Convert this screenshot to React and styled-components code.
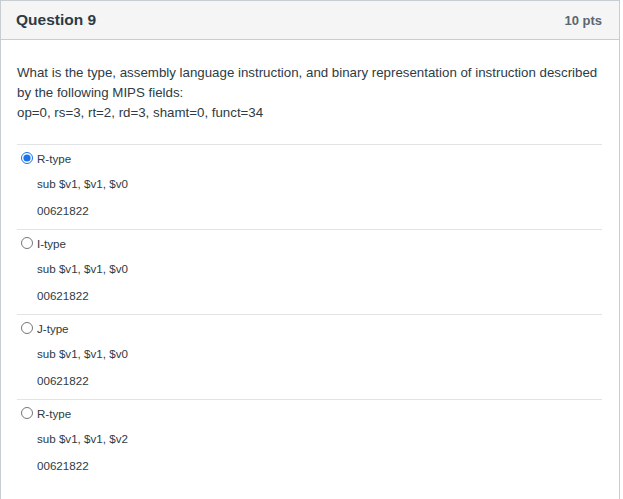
import React from 'react';
import styled, { createGlobalStyle } from 'styled-components';

const GlobalStyle = createGlobalStyle`
    html, body {
        margin: 0;
        padding: 0;
        background: #ffffff;
        font-family: "Liberation Sans", Arial, sans-serif;
        color: #2d3b45;
    }
`;

const Panel = styled.div`
    width: 620px;
    min-height: 520px;
    border: 1px solid #c7cdd1;
    border-bottom: none;
    box-sizing: border-box;
    background: white;
`;

const Header = styled.div`
    height: 39px;
    box-sizing: border-box;
    display: flex;
    align-items: center;
    justify-content: space-between;
    padding: 0 17px 0 15px;
    background: #f5f5f5;
    border-bottom: 1px solid #c7cdd1;
`;

const Title = styled.div`
    font-size: 15.5px;
    font-weight: 700;
    color: #2d3b45;
`;

const Points = styled.div`
    font-size: 13px;
    font-weight: 700;
    color: #5b6770;
`;

const Body = styled.div`
    padding: 23px 17px 0 16px;
`;

const QuestionText = styled.div`
    font-size: 13.3px;
    line-height: 20px;
    color: #2d3b45;
    padding-bottom: 21px;
    border-bottom: 1px solid #e2e4e6;
`;

const Answer = styled.div`
    display: flex;
    flex-direction: column;
    padding: 5px 0 10px 0;
    border-bottom: ${(p) => (p.last ? 'none' : '1px solid #e2e4e6')};
`;

const AnswerLabel = styled.label`
    display: flex;
    align-items: center;
    gap: 4px;
    height: 16px;
    font-size: 11.6px;
    color: #2d3b45;
`;

const Radio = styled.input`
    width: 12px;
    height: 12px;
    margin: 0 0 0 4px;
    accent-color: #1a73e8;
`;

const SubLine = styled.div`
    padding-left: 20px;
    margin-top: ${(p) => p.top}px;
    font-size: 11.6px;
    line-height: 16px;
    color: #2d3b45;
`;

const answers = [
    { type: 'R-type', asm: 'sub $v1, $v1, $v0', bin: '00621822', checked: true },
    { type: 'I-type', asm: 'sub $v1, $v1, $v0', bin: '00621822' },
    { type: 'J-type', asm: 'sub $v1, $v1, $v0', bin: '00621822' },
    { type: 'R-type', asm: 'sub $v1, $v1, $v2', bin: '00621822' },
];

function App() {
    return (
        <>
            <GlobalStyle />
            <Panel>
                <Header>
                    <Title>Question 9</Title>
                    <Points>10 pts</Points>
                </Header>
                <Body>
                    <QuestionText>
                        What is the type, assembly language instruction, and binary representation of instruction described by the following MIPS fields:
                        <br />
                        op=0, rs=3, rt=2, rd=3, shamt=0, funct=34
                    </QuestionText>
                    {answers.map((a, i) => (
                        <Answer key={i} last={i === answers.length - 1}>
                            <AnswerLabel>
                                <Radio type="radio" name="q9" defaultChecked={!!a.checked} />
                                {a.type}
                            </AnswerLabel>
                            <SubLine top={10}>{a.asm}</SubLine>
                            <SubLine top={11}>{a.bin}</SubLine>
                        </Answer>
                    ))}
                </Body>
            </Panel>
        </>
    );
}

export default App;
